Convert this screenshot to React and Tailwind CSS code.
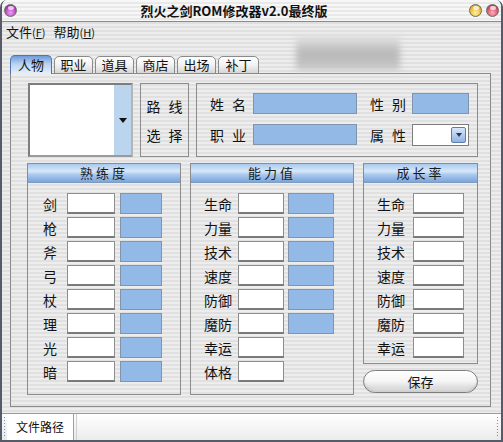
import React from 'react';

const stripes = 'bg-[repeating-linear-gradient(to_bottom,#ededed_0px,#ededed_2px,#e0e0e0_2px,#e0e0e0_4px)]';
const font = { fontFamily: '"Noto Sans CJK SC", "Liberation Sans", sans-serif' };

const Orb = ({ from, to }) => (
  <div
    className="w-[13px] h-[13px] rounded-full border border-[#6b6b6b] relative overflow-hidden"
    style={{ background: `radial-gradient(circle at 50% 70%, ${from} 0%, ${to} 80%)` }}
  >
    <div className="absolute left-[3px] top-[1px] w-[6px] h-[4px] rounded-full bg-white/70" />
  </div>
);

const WhiteBox = ({ w }) => (
  <div className={`${w} h-[21px] bg-white border border-[#8d8d8d] border-b-2 border-b-[#7a7a7a]`} />
);

const BlueBox = ({ w }) => (
  <div className={`${w} h-[21px] bg-[#93b9e6] border border-[#8194ab]`} />
);

const Header = ({ text }) => (
  <div className="h-[19px] flex items-center justify-center text-[13px] tracking-[3px] text-[#1a1a1a] border-b border-[#7f9cc0] bg-[linear-gradient(to_bottom,#a9c9ef_0%,#d8e7f8_40%,#a8c7ee_60%,#7ba6dc_100%)]">
    {text}
  </div>
);

const Label = ({ children, className = '' }) => (
  <span className={`w-[36px] whitespace-nowrap flex justify-between text-[14px] leading-none ${className}`}>
    <span>{children[0]}</span>
    <span>{children[1]}</span>
  </span>
);

const tabs = ['人物', '职业', '道具', '商店', '出场', '补丁'];

export default function App() {
  const skill = ['剑', '枪', '斧', '弓', '杖', '理', '光', '暗'];
  const ability = ['生命', '力量', '技术', '速度', '防御', '魔防', '幸运', '体格'];
  const growth = ['生命', '力量', '技术', '速度', '防御', '魔防', '幸运'];

  return (
    <div
      style={font}
      className={`relative w-[503px] h-[442px] flex flex-col overflow-hidden rounded-t-[7px] border-x-2 border-b-2 border-[#555b68] ${stripes} text-[#111]`}
    >
      {/* title bar */}
      <div className="relative h-[22px] shrink-0 flex items-center border-b border-[#8a8a8a] bg-[repeating-linear-gradient(to_bottom,#f7f7f7_0px,#f7f7f7_2px,#e9e9e9_2px,#e9e9e9_4px)]">
        <div className="pl-[2px]">
          <Orb from="#f0a0f4" to="#9a1fa8" />
        </div>
        <div className="flex-1 text-center text-[13px] font-bold leading-none pr-[18px]">烈火之剑ROM修改器v2.0最终版</div>
        <div className="flex gap-[4px] pr-[2px]">
          <Orb from="#fff1a0" to="#d9a520" />
          <Orb from="#ffb0bc" to="#c9304a" />
        </div>
      </div>

      {/* menu */}
      <div className="h-[20px] shrink-0 flex items-center gap-[8px] pl-[4px] text-[13px]">
        <span>文件<span className="text-[11px]">(<u>F</u>)</span></span>
        <span>帮助<span className="text-[11px]">(<u>H</u>)</span></span>
      </div>

      {/* blurred overlay */}
      <div className="absolute left-[294px] top-[36px] w-[104px] h-[34px] blur-[3px] bg-[linear-gradient(to_bottom,#e4e4e4,#b8b8b8_50%,#c8c8c8)]" />

      {/* tabs */}
      <div className="mt-[13px] h-[19px] shrink-0 flex items-end gap-[2px] pl-[8px] relative z-10 -mb-px">
        {tabs.map((t, i) => (
          <div
            key={t}
            className={
              i === 0
                ? 'h-[19px] w-[42px] flex items-center justify-center text-[13px] rounded-t-[5px] border border-b-0 border-[#4f77ad] bg-[linear-gradient(to_bottom,#6f9bd8_0%,#b9d3f2_45%,#e6f0fb_100%)]'
                : 'h-[18px] w-[39px] flex items-center justify-center text-[13px] rounded-t-[5px] border border-[#8a8a8a] bg-[linear-gradient(to_bottom,#ffffff_0%,#f2f2f2_50%,#d6d6d6_100%)]'
            }
            style={i === 5 ? { width: 41 } : undefined}
          >
            {t}
          </div>
        ))}
      </div>

      {/* panel */}
      <div className={`ml-[8px] w-[481px] h-[334px] shrink-0 border border-[#8a8a8a] ${stripes} pt-[9px]`}>
        {/* top row */}
        <div className="flex pl-[17px] h-[74px]">
          <div className="w-[105px] h-[74px] flex bg-white border-2 border-[#7d7d7d] border-r-[#b5b5b5] border-b-[#9a9a9a]">
            <div className="flex-1" />
            <div className="w-[17px] bg-[#bcd5ef] flex items-center justify-center">
              <svg width="8" height="5" viewBox="0 0 8 5"><path d="M0 0h8L4 5z" fill="#111" /></svg>
            </div>
          </div>
          <div className="ml-[7px] w-[49px] h-[74px] border border-[#8c8c8c] flex flex-col items-center justify-center gap-[15px]">
            <Label>路线</Label>
            <Label>选择</Label>
          </div>
          <div className="ml-[7px] w-[282px] h-[74px] border border-[#8c8c8c] pl-[13px] pt-[9px] flex flex-col gap-[10px]">
            <div className="flex items-center h-[21px]">
              <Label>姓名</Label>
              <div className="ml-[7px] w-[104px] h-[21px] bg-[#93b9e6] border border-[#8194ab]" />
              <Label className="ml-[13px]">性别</Label>
              <div className="ml-[6px] w-[57px] h-[21px] bg-[#93b9e6] border border-[#8194ab]" />
            </div>
            <div className="flex items-center h-[21px]">
              <Label>职业</Label>
              <div className="ml-[7px] w-[104px] h-[21px] bg-[#93b9e6] border border-[#8194ab]" />
              <Label className="ml-[13px]">属性</Label>
              <div className="ml-[6px] w-[57px] h-[22px] bg-white border border-[#7d7d7d] flex items-center justify-end pr-[2px]">
                <div className="w-[15px] h-[16px] rounded-[2px] border border-[#5f7fa8] bg-[linear-gradient(to_bottom,#d9e7f8,#8fb3e2)] flex items-center justify-center">
                  <svg width="6" height="4" viewBox="0 0 6 4"><path d="M0 0h6L3 4z" fill="#233a5e" /></svg>
                </div>
              </div>
            </div>
          </div>
        </div>

        {/* groups */}
        <div className="flex pl-[16px] mt-[6px]">
          <div className="w-[154px] h-[232px] border border-[#8c8c8c]">
            <Header text="熟练度" />
            <div className="pt-[10px] pl-[8px] flex flex-col gap-[3px]">
              {skill.map((s) => (
                <div key={s} className="flex items-center">
                  <span className="w-[28px] text-center text-[14px] leading-none">{s}</span>
                  <div className="ml-[3px]"><WhiteBox w="w-[48px]" /></div>
                  <div className="ml-[5px]"><BlueBox w="w-[42px]" /></div>
                </div>
              ))}
            </div>
          </div>

          <div className="ml-[9px] w-[164px] h-[232px] border border-[#8c8c8c]">
            <Header text="能力值" />
            <div className="pt-[10px] pl-[13px] flex flex-col gap-[3px]">
              {ability.map((s, i) => (
                <div key={s} className="flex items-center">
                  <span className="w-[28px] text-[14px] leading-none">{s}</span>
                  <div className="ml-[6px]"><WhiteBox w="w-[46px]" /></div>
                  {i < 6 && <div className="ml-[4px]"><BlueBox w="w-[46px]" /></div>}
                </div>
              ))}
            </div>
          </div>

          <div className="ml-[9px] w-[115px] flex flex-col">
            <div className="h-[201px] border border-[#8c8c8c]">
              <Header text="成长率" />
              <div className="pt-[10px] pl-[13px] flex flex-col gap-[3px]">
                {growth.map((s) => (
                  <div key={s} className="flex items-center">
                    <span className="w-[28px] text-[14px] leading-none">{s}</span>
                    <div className="ml-[8px]"><WhiteBox w="w-[51px]" /></div>
                  </div>
                ))}
              </div>
            </div>
            <button className="mt-[6px] h-[23px] w-[115px] rounded-full border border-[#7e7e7e] text-[13px] bg-[linear-gradient(to_bottom,#ffffff_0%,#f4f4f4_50%,#dcdcdc_80%,#ececec_100%)] shadow-[inset_0_-2px_2px_rgba(0,0,0,0.12)]">
              保存
            </button>
          </div>
        </div>
      </div>

      {/* status bar */}
      <div className="mt-[6px] h-[27px] shrink-0 flex items-stretch border-t border-[#9a9a9a] bg-[linear-gradient(to_bottom,#fdfdfd,#e8e8e8)]">
        <div className="w-[4px] ml-[1px] my-[2px] bg-[radial-gradient(circle,#6f8fc4_0.8px,transparent_1px)] bg-[length:3px_3px]" />
        <div className="w-[67px] flex items-center justify-center text-[12px] border-r border-[#a0a0a0] bg-white">文件路径</div>
        <div className="flex-1 ml-[2px] border-l border-[#d0d0d0] bg-[linear-gradient(to_bottom,#ffffff,#ececec)]" />
        <div className="w-[4px] mr-[1px] my-[2px] bg-[radial-gradient(circle,#6f8fc4_0.8px,transparent_1px)] bg-[length:3px_3px]" />
      </div>
    </div>
  );
}
